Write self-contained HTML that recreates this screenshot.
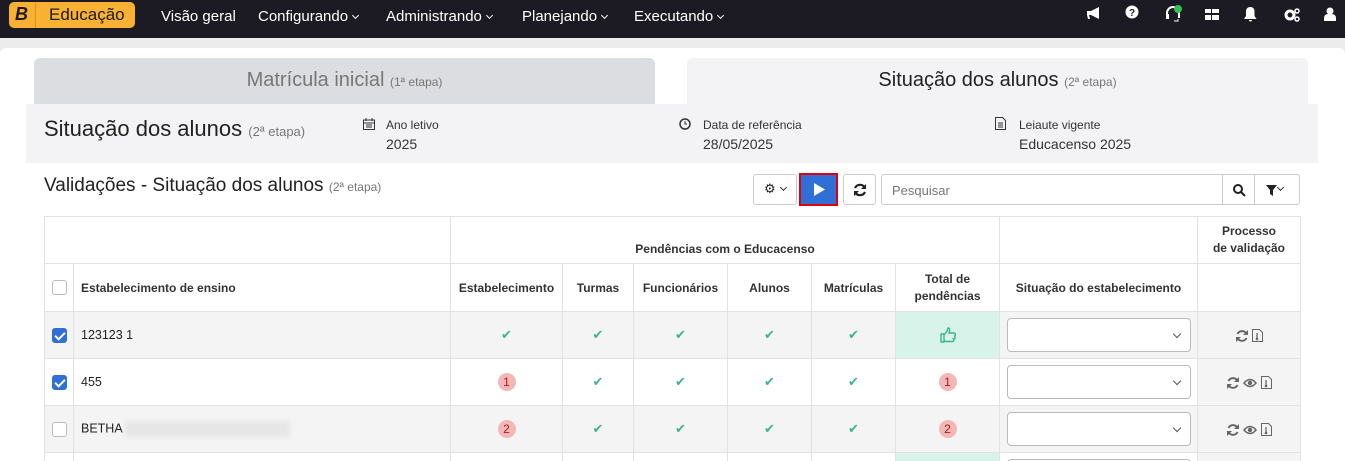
<!DOCTYPE html>
<html><head><meta charset="utf-8"><style>
*{box-sizing:border-box;margin:0;padding:0}
html,body{width:1345px;height:461px;overflow:hidden}
body{background:#ececec;font-family:"Liberation Sans","DejaVu Sans",sans-serif;color:#222;position:relative}
.nav{position:absolute;left:0;top:0;width:1345px;height:38px;background:#1c1b23;color:#fff;font-size:15px}
.nav .it{position:absolute;top:8px}
.logo{position:absolute;left:9px;top:2px;height:26px;width:126px;background:#f8b132;border-radius:5px}
.logo .b{position:absolute;left:6px;top:2px;font:italic bold 18px "Liberation Sans",sans-serif;color:#1c1b23}
.logo .sep{position:absolute;left:26px;top:0;width:4px;height:26px;background:#f8b132;border-left:1px solid #d8961e}
.logo .t{position:absolute;left:40px;top:3px;font-size:17px;color:#1c1b23}
.car{display:inline-block;width:5px;height:5px;border-right:1.5px solid #fff;border-bottom:1.5px solid #fff;transform:rotate(45deg);margin-left:5px;position:relative;top:-3px}
.card{position:absolute;left:0;top:48px;width:1345px;height:440px;background:#fff;border-radius:6px}
.tab{position:absolute;top:58px;height:46px;width:621px;border-radius:6px 6px 0 0;text-align:center;font-size:20px;padding-top:11px}
.small{font-size:12px;color:#777}
.band{position:absolute;left:26px;top:104px;width:1292px;height:59px;background:#f3f3f5}
.lbl{position:absolute;font-size:12px;color:#333}
.val{position:absolute;font-size:14px;color:#333}
.btn{position:absolute;top:174px;height:31px;border:1px solid #ccc;border-radius:3px;background:#fff}
table{position:absolute;left:44px;top:216px;border-collapse:collapse;font-size:12.5px;table-layout:fixed}
td{border:1px solid #e2e2e2;text-align:center;vertical-align:middle;padding:0}
tr.h1 td{height:47px}
tr.h td{height:48px;font-weight:bold;font-size:12px;color:#333}
tr.r td{height:47px}
tr.g td{background:#f4f4f4}
.cb{display:inline-block;width:15px;height:15px;border:1.5px solid #bbb;border-radius:3px;background:#fff;vertical-align:middle}
.cb.on{background:#2f6fd6;border-color:#2f6fd6;position:relative}
.cb.on:after{content:"";position:absolute;left:4px;top:1px;width:4px;height:8px;border-right:2px solid #fff;border-bottom:2px solid #fff;transform:rotate(45deg)}
.ck{color:#3bb58a;font-size:13px;font-weight:bold}
.bd{display:inline-block;width:18px;height:18px;border-radius:9px;background:#f3b7b5;color:#a02020;font-size:12px;line-height:18px}
.sel{margin:0 auto;width:184px;height:34px;border:1px solid #bbb;border-radius:4px;background:#fff;position:relative}
.sel:after{content:"";position:absolute;right:10px;top:12px;width:5px;height:5px;border-right:1.2px solid #555;border-bottom:1.2px solid #555;transform:rotate(45deg)}
.pv{background:#f4f4f4}
.pv svg{vertical-align:middle;margin:0 2px}
</style></head><body>
<div class="nav">
 <div class="logo"><span class="b">B</span><span class="sep"></span><span class="t">Educação</span></div>
 <span class="it" style="left:161px">Visão geral</span>
 <span class="it" style="left:258px">Configurando<i class="car"></i></span>
 <span class="it" style="left:386px">Administrando<i class="car"></i></span>
 <span class="it" style="left:522px">Planejando<i class="car"></i></span>
 <span class="it" style="left:634px">Executando<i class="car"></i></span>
 <svg style="position:absolute;left:1086px;top:7px" width="16" height="14"><path d="M1 4h4l8-4v12L5 8H3l1 4H2L1 8z" fill="#fff"/></svg>
 <svg style="position:absolute;left:1125px;top:5px" width="14" height="14"><circle cx="7" cy="7" r="6.5" fill="#fff"/><text x="7" y="11" font-size="10" font-weight="bold" text-anchor="middle" fill="#1c1b23" font-family="Liberation Sans">?</text></svg>
 <svg style="position:absolute;left:1164px;top:4px" width="20" height="20"><path d="M3 14V9a6 6 0 0 1 12 0v5" stroke="#fff" stroke-width="2" fill="none"/><rect x="2" y="10" width="3" height="5" fill="#fff"/><path d="M14 15v2h-4" stroke="#fff" fill="none"/><circle cx="14" cy="5" r="4" fill="#2fc24d"/></svg>
 <svg style="position:absolute;left:1205px;top:9px" width="14" height="11"><rect x="0" y="0" width="6" height="4" fill="#fff"/><rect x="7" y="0" width="7" height="4" fill="#fff"/><rect x="0" y="6" width="6" height="5" fill="#fff"/><rect x="7" y="6" width="7" height="5" fill="#fff"/></svg>
 <svg style="position:absolute;left:1244px;top:6px" width="13" height="16"><path d="M6.5 1a4 4 0 0 1 4 4v5l2 3H0l2-3V5a4 4 0 0 1 4.5-4z M5 14h3a1.5 1.5 0 0 1-3 0z" fill="#fff"/></svg>
 <svg style="position:absolute;left:1284px;top:7px" width="16" height="16"><circle cx="6" cy="8" r="4" fill="none" stroke="#fff" stroke-width="3"/><circle cx="13" cy="4" r="2" fill="none" stroke="#fff" stroke-width="1.5"/><circle cx="13" cy="12" r="2" fill="none" stroke="#fff" stroke-width="1.5"/></svg>
 <svg style="position:absolute;left:1324px;top:7px" width="12" height="14"><circle cx="6" cy="4" r="3.5" fill="#fff"/><path d="M0 14v-3a4 4 0 0 1 4-4h4a4 4 0 0 1 4 4v3z" fill="#fff"/></svg>
</div>
<div class="card"></div>
<div class="tab" style="left:34px;background:#dcdde1;color:#777">Matrícula inicial <span class="small">(1ª etapa)</span></div>
<div class="tab" style="left:687px;background:#f3f3f5;color:#222">Situação dos alunos <span class="small">(2ª etapa)</span></div>
<div class="band">
 <div style="position:absolute;left:18px;top:12px;font-size:22px;color:#222">Situação dos alunos <span class="small" style="font-size:13px">(2ª etapa)</span></div>
 <svg style="position:absolute;left:337px;top:14px" width="12" height="12"><rect x="0.5" y="2" width="11" height="9.5" fill="none" stroke="#333"/><path d="M0 5h12M3 0v3M9 0v3M3 7h6M3 9h6" stroke="#333"/></svg>
 <div class="lbl" style="left:360px;top:14px">Ano letivo</div><div class="val" style="left:360px;top:32px">2025</div>
 <svg style="position:absolute;left:653px;top:14px" width="12" height="12"><circle cx="6" cy="6" r="5" fill="none" stroke="#333" stroke-width="1.5"/><path d="M6 3v3h2" stroke="#333" fill="none"/></svg>
 <div class="lbl" style="left:677px;top:14px">Data de referência</div><div class="val" style="left:677px;top:32px">28/05/2025</div>
 <svg style="position:absolute;left:969px;top:13px" width="11" height="13"><path d="M.5.5h7l3 3v9H.5z M3 6h5M3 8h5M3 10h5" fill="none" stroke="#333"/></svg>
 <div class="lbl" style="left:993px;top:14px">Leiaute vigente</div><div class="val" style="left:993px;top:32px">Educacenso 2025</div>
</div>
<div style="position:absolute;left:44px;top:175px;font-size:19px;color:#222">Validações - Situação dos alunos <span class="small">(2ª etapa)</span></div>
<div class="btn" style="left:753px;width:44px;font-size:13px;padding:6px 0 0 10px">⚙<i class="car" style="border-color:#333"></i></div>
<div style="position:absolute;left:799px;top:173px;width:39px;height:33px;border:2px solid #e0000c;background:#2f6fd6"><svg style="position:absolute;left:13px;top:8px" width="12" height="14"><path d="M0 0l11 6.5L0 13z" fill="#fff"/></svg></div>
<div class="btn" style="left:843px;width:33px"><svg style="position:absolute;left:9px;top:8px" width="14" height="14"><path d="M12 5A5.5 5.5 0 0 0 2 5M2 9a5.5 5.5 0 0 0 10 0" fill="none" stroke="#222" stroke-width="2.2"/><path d="M13 1v5H8zM1 13V8h5z" fill="#222"/></svg></div>
<div class="btn" style="left:881px;width:342px;font-size:13px;color:#777;padding:8px 10px;border-radius:3px 0 0 3px">Pesquisar</div>
<div class="btn" style="left:1222px;width:33px;border-radius:0"><svg style="position:absolute;left:10px;top:9px" width="13" height="13"><circle cx="5" cy="5" r="4" fill="none" stroke="#222" stroke-width="2"/><path d="M8 8l4 4" stroke="#222" stroke-width="2"/></svg></div>
<div class="btn" style="left:1254px;width:46px;border-radius:0 3px 3px 0"><svg style="position:absolute;left:11px;top:10px" width="11" height="11"><path d="M0 0h11L7 5v6L4 9V5z" fill="#222"/></svg><i class="car" style="border-color:#333;position:absolute;left:18px;top:10px"></i></div>
<table>
<colgroup><col style="width:29px"><col style="width:377px"><col style="width:112px"><col style="width:71px"><col style="width:94px"><col style="width:84px"><col style="width:84px"><col style="width:104px"><col style="width:198px"><col style="width:103px"></colgroup>
<tr class="h1"><td colspan="2"></td><td colspan="6" style="font-weight:bold;font-size:12px;color:#333;padding-top:18px">Pendências com o Educacenso</td><td></td><td style="font-weight:bold;font-size:12px;color:#333;line-height:17px">Processo<br>de validação</td></tr>
<tr class="h"><td><span class="cb"></span></td><td style="text-align:left;padding-left:7px">Estabelecimento de ensino</td><td>Estabelecimento</td><td>Turmas</td><td>Funcionários</td><td>Alunos</td><td>Matrículas</td><td style="line-height:17px">Total de<br>pendências</td><td>Situação do estabelecimento</td><td></td></tr>
<tr class="r g"><td><span class="cb on"></span></td><td style="text-align:left;padding-left:7px">123123 1</td><td class="ck">✔</td><td class="ck">✔</td><td class="ck">✔</td><td class="ck">✔</td><td class="ck">✔</td><td style="background:#d8f3ea"><svg width="16" height="16" style="vertical-align:middle"><path d="M1 7h3v8H1z M4 8l3-4 1-3c2 0 2 2 1 5h5a1.5 1.5 0 0 1 0 3 1.5 1.5 0 0 1-.5 3 1.5 1.5 0 0 1-.8 2.5H6l-2-1" fill="none" stroke="#3bb58a" stroke-width="1.4"/></svg></td><td><div class="sel"></div></td><td class="pv"><svg width="12" height="12"><path d="M10.5 4A5 5 0 0 0 1.5 4M1.5 8a5 5 0 0 0 9 0" fill="none" stroke="#666" stroke-width="2"/><path d="M12 0v5H7zM0 12V7h5z" fill="#666"/></svg><svg width="11" height="13"><path d="M.5.5h7l3 3v9H.5z" fill="none" stroke="#666"/><path d="M5 4v5" stroke="#666" stroke-width="1.3"/><circle cx="5" cy="10" r="1.3" fill="#666"/></svg></td></tr>
<tr class="r"><td><span class="cb on"></span></td><td style="text-align:left;padding-left:7px">455</td><td><span class="bd">1</span></td><td class="ck">✔</td><td class="ck">✔</td><td class="ck">✔</td><td class="ck">✔</td><td><span class="bd">1</span></td><td><div class="sel"></div></td><td class="pv"><svg width="12" height="12"><path d="M10.5 4A5 5 0 0 0 1.5 4M1.5 8a5 5 0 0 0 9 0" fill="none" stroke="#666" stroke-width="2"/><path d="M12 0v5H7zM0 12V7h5z" fill="#666"/></svg><svg width="14" height="10"><path d="M1 5q6-7 12 0q-6 7-12 0z" fill="none" stroke="#666" stroke-width="1.5"/><circle cx="7" cy="5" r="2.2" fill="#666"/></svg><svg width="11" height="13"><path d="M.5.5h7l3 3v9H.5z" fill="none" stroke="#666"/><path d="M5 4v5" stroke="#666" stroke-width="1.3"/><circle cx="5" cy="10" r="1.3" fill="#666"/></svg></td></tr>
<tr class="r g"><td><span class="cb"></span></td><td style="text-align:left;padding-left:7px">BETHA <span style="display:inline-block;width:165px;height:16px;background:#e6e6e6;filter:blur(2px);vertical-align:middle"></span></td><td><span class="bd">2</span></td><td class="ck">✔</td><td class="ck">✔</td><td class="ck">✔</td><td class="ck">✔</td><td><span class="bd">2</span></td><td><div class="sel"></div></td><td class="pv"><svg width="12" height="12"><path d="M10.5 4A5 5 0 0 0 1.5 4M1.5 8a5 5 0 0 0 9 0" fill="none" stroke="#666" stroke-width="2"/><path d="M12 0v5H7zM0 12V7h5z" fill="#666"/></svg><svg width="14" height="10"><path d="M1 5q6-7 12 0q-6 7-12 0z" fill="none" stroke="#666" stroke-width="1.5"/><circle cx="7" cy="5" r="2.2" fill="#666"/></svg><svg width="11" height="13"><path d="M.5.5h7l3 3v9H.5z" fill="none" stroke="#666"/><path d="M5 4v5" stroke="#666" stroke-width="1.3"/><circle cx="5" cy="10" r="1.3" fill="#666"/></svg></td></tr>
<tr class="r"><td style="background:#fff"></td><td style="background:#fff"></td><td style="background:#fff"></td><td style="background:#fff"></td><td style="background:#fff"></td><td style="background:#fff"></td><td style="background:#fff"></td><td style="background:#d8f3ea"></td><td style="background:#fff;vertical-align:top;padding-top:6px"><div class="sel"></div></td><td style="background:#f4f4f4"></td></tr>
</table>
</body></html>
